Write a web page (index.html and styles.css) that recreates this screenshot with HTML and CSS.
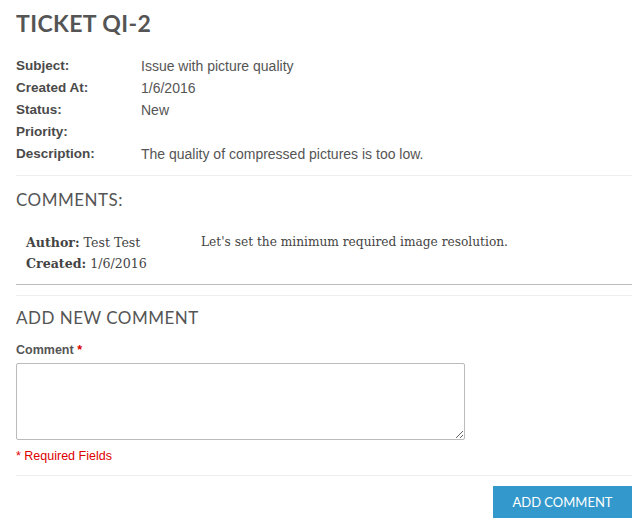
FILE: index.html
```html
<!DOCTYPE html>
<html>
<head>
<meta charset="utf-8">
<link rel="stylesheet" href="styles.css">
</head>
<body>
<div class="page">
  <h1 class="title">TICKET QI-2</h1>
  <div class="details">
    <div class="row"><span class="label">Subject:</span><span class="value">Issue with picture quality</span></div>
    <div class="row"><span class="label">Created At:</span><span class="value">1/6/2016</span></div>
    <div class="row"><span class="label">Status:</span><span class="value">New</span></div>
    <div class="row"><span class="label">Priority:</span><span class="value"></span></div>
    <div class="row"><span class="label">Description:</span><span class="value">The quality of compressed pictures is too low.</span></div>
  </div>
  <div class="section comments">
    <h2 class="heading">COMMENTS:</h2>
    <div class="comment">
      <div class="meta">
        <div><b>Author:</b> Test Test</div>
        <div><b>Created:</b> 1/6/2016</div>
      </div>
      <div class="text">Let's set the minimum required image resolution.</div>
    </div>
  </div>
  <div class="section add">
    <h2 class="heading">ADD NEW COMMENT</h2>
    <label class="field-label">Comment <span class="req">*</span></label>
    <textarea class="input"></textarea>
    <div class="req-note">* Required Fields</div>
  </div>
  <div class="actions">
    <button class="btn">ADD COMMENT</button>
  </div>
</div>
</body>
</html>
```
FILE: styles.css
```css
html, body { margin: 0; padding: 0; background: #fff; }
body { font-family: "Liberation Sans", Arial, sans-serif; color: #555; }
.page { padding: 10px 11px 0 16px; }
.title { margin: 0; font-family: "Lato", "Open Sans", sans-serif; font-weight: 700; font-size: 23px; color: #555; line-height: 26px; letter-spacing: 0.4px; }
.details { margin-top: 19px; padding-bottom: 10px; border-bottom: 1px solid #eee; }
.row { display: flex; height: 22px; line-height: 22px; font-size: 14px; }
.label { width: 125px; font-weight: 700; color: #4a4a4a; font-size: 13.5px; }
.value { color: #555; }
.heading { margin: 0; font-family: "Lato", "Open Sans", sans-serif; font-weight: 400; font-size: 17px; color: #555; line-height: 20px; letter-spacing: 0.5px; }
.comments { padding-top: 14px; }
.comment { display: flex; margin-top: 22px; padding: 0 10px 10px; border-bottom: 1px solid #bbb; font-family: "DejaVu Serif", Georgia, serif; font-size: 12.2px; color: #444; line-height: 21px; }
.comment .meta { width: 175px; }
.comment .meta div { font-size: 12.6px; }
.comment b { font-weight: 700; }
.add { margin-top: 10px; border-top: 1px solid #eee; padding-top: 12px; padding-bottom: 12px; border-bottom: 1px solid #eee; }
.field-label { display: block; margin-top: 15px; font-size: 12.5px; font-weight: 700; color: #555; }
.req { color: #d00; }
.input { display: block; margin-top: 6px; width: 449px; height: 77px; box-sizing: border-box; border: 1px solid #bbb; border-radius: 2px; padding: 4px; font: inherit; resize: vertical; }
.req-note { margin-top: 9px; font-size: 12.5px; color: #d00; }
.actions { display: flex; justify-content: flex-end; padding-top: 10px; }
.btn { background: #3399cc; color: #fff; border: 0; width: 139px; height: 32px; font-family: "Lato", "Open Sans", sans-serif; font-size: 13px; padding: 0; }
```
